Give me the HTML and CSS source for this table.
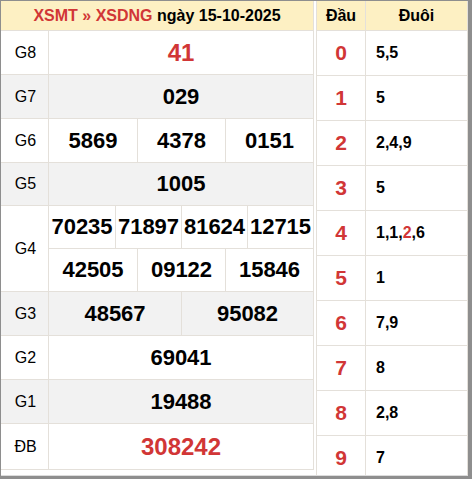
FILE: index.html
```html
<!DOCTYPE html>
<html lang="vi">
<head>
<meta charset="utf-8">
<title>XSMT » XSDNG ngày 15-10-2025</title>
<link rel="stylesheet" href="styles.css">
</head>
<body>
<div class="frame">
  <div class="inner">
    <div class="ltbl">
      <div class="hdr"><span class="red">XSMT » XSDNG</span>&nbsp;ngày 15-10-2025</div>
      <div class="row"><div class="lbl">G8</div><div class="cells"><div class="cell big red">41</div></div></div>
      <div class="row alt"><div class="lbl">G7</div><div class="cells"><div class="cell">029</div></div></div>
      <div class="row"><div class="lbl">G6</div><div class="cells"><div class="cell">5869</div><div class="cell">4378</div><div class="cell">0151</div></div></div>
      <div class="row alt h43"><div class="lbl">G5</div><div class="cells"><div class="cell">1005</div></div></div>
      <div class="row g4"><div class="lbl">G4</div>
        <div class="stack">
          <div class="cells sub"><div class="cell">70235</div><div class="cell">71897</div><div class="cell">81624</div><div class="cell">12715</div></div>
          <div class="cells"><div class="cell">42505</div><div class="cell">09122</div><div class="cell">15846</div></div>
        </div>
      </div>
      <div class="row alt"><div class="lbl">G3</div><div class="cells"><div class="cell">48567</div><div class="cell">95082</div></div></div>
      <div class="row"><div class="lbl">G2</div><div class="cells"><div class="cell">69041</div></div></div>
      <div class="row alt"><div class="lbl">G1</div><div class="cells"><div class="cell">19488</div></div></div>
      <div class="row db"><div class="lbl">ĐB</div><div class="cells"><div class="cell big red">308242</div></div></div>
    </div>
    <div class="rtbl">
      <div class="rhdr"><div class="dau">Đầu</div><div class="duoi center">Đuôi</div></div>
      <div class="rrow"><div class="dau red">0</div><div class="duoi">5,5</div></div>
      <div class="rrow"><div class="dau red">1</div><div class="duoi">5</div></div>
      <div class="rrow"><div class="dau red">2</div><div class="duoi">2,4,9</div></div>
      <div class="rrow"><div class="dau red">3</div><div class="duoi">5</div></div>
      <div class="rrow"><div class="dau red">4</div><div class="duoi">1,1,<span class="red">2</span>,6</div></div>
      <div class="rrow"><div class="dau red">5</div><div class="duoi">1</div></div>
      <div class="rrow"><div class="dau red">6</div><div class="duoi">7,9</div></div>
      <div class="rrow"><div class="dau red">7</div><div class="duoi">8</div></div>
      <div class="rrow"><div class="dau red">8</div><div class="duoi">2,8</div></div>
      <div class="rrow"><div class="dau red">9</div><div class="duoi">7</div></div>
    </div>
  </div>
</div>
</body>
</html>
```
FILE: styles.css
```css
html, body {
  margin: 0;
  padding: 0;
  background: #fff;
}
body {
  font-family: "Liberation Sans", Arial, sans-serif;
  color: #000;
}
.frame {
  width: 472px;
  height: 479px;
  box-sizing: border-box;
  border-style: solid;
  border-color: #8e8e8e;
  border-width: 1px 4px 3px 1px;
  background: #fff;
  overflow: hidden;
}
.inner {
  display: flex;
  gap: 2px;
  height: 100%;
  box-sizing: border-box;
  border-bottom: 1px solid #dcdcdc;
  align-items: flex-start;
}
.red { color: #d13636; }

/* left table */
.ltbl {
  width: 313px;
  box-sizing: border-box;
  border-right: 1px solid #e4e0da;
}
.hdr {
  height: 30px;
  box-sizing: border-box;
  border-bottom: 1px solid #e4e0da;
  background: #fdf0c3;
  display: flex;
  align-items: center;
  justify-content: center;
  font-weight: bold;
  font-size: 16px;
  white-space: nowrap;
}
.row {
  display: flex;
  height: 44px;
  box-sizing: border-box;
  border-bottom: 1px solid #e4e0da;
  background: #fff;
}
.row.alt { background: #f2f2f2; }
.row.h43 { height: 43px; }
.row.g4 { height: 86px; }
.row.db { height: 46px; }
.lbl {
  width: 48px;
  flex: none;
  box-sizing: border-box;
  border-right: 1px solid #e4e0da;
  display: flex;
  align-items: center;
  justify-content: center;
  font-size: 16px;
  padding-left: 2px;
}
.stack {
  flex: 1;
  display: flex;
  flex-direction: column;
}
.cells {
  flex: 1;
  display: grid;
  grid-auto-flow: column;
  grid-auto-columns: 1fr;
}
.cells.sub {
  flex: none;
  height: 43px;
  box-sizing: border-box;
  border-bottom: 1px solid #e4e0da;
}
.cell {
  display: flex;
  align-items: center;
  justify-content: center;
  font-weight: bold;
  font-size: 22px;
  white-space: nowrap;
  min-width: 0;
}
.cell + .cell { border-left: 1px solid #e4e0da; }
.cell.big { font-size: 24px; }

/* right table */
.rtbl {
  width: 152px;
  flex: none;
  align-self: stretch;
  box-sizing: border-box;
  border-left: 1px solid #e4e0da;
  border-right: 1px solid #e4e0da;
  overflow: hidden;
}
.rhdr {
  display: flex;
  height: 30px;
  box-sizing: border-box;
  border-bottom: 1px solid #e4e0da;
  background: #fdf0c3;
  font-weight: bold;
  font-size: 16px;
}
.rrow {
  display: flex;
  height: 45px;
  flex: none;
  box-sizing: border-box;
  border-bottom: 1px solid #e4e0da;
}
.dau {
  width: 49px;
  flex: none;
  box-sizing: border-box;
  border-right: 1px solid #e4e0da;
  display: flex;
  align-items: center;
  justify-content: center;
}
.rrow .dau {
  font-weight: bold;
  font-size: 21px;
}
.duoi {
  flex: 1;
  display: flex;
  align-items: center;
  padding-left: 10px;
  font-weight: bold;
  font-size: 16px;
}
.duoi.center {
  justify-content: center;
  padding-left: 0;
}
```
